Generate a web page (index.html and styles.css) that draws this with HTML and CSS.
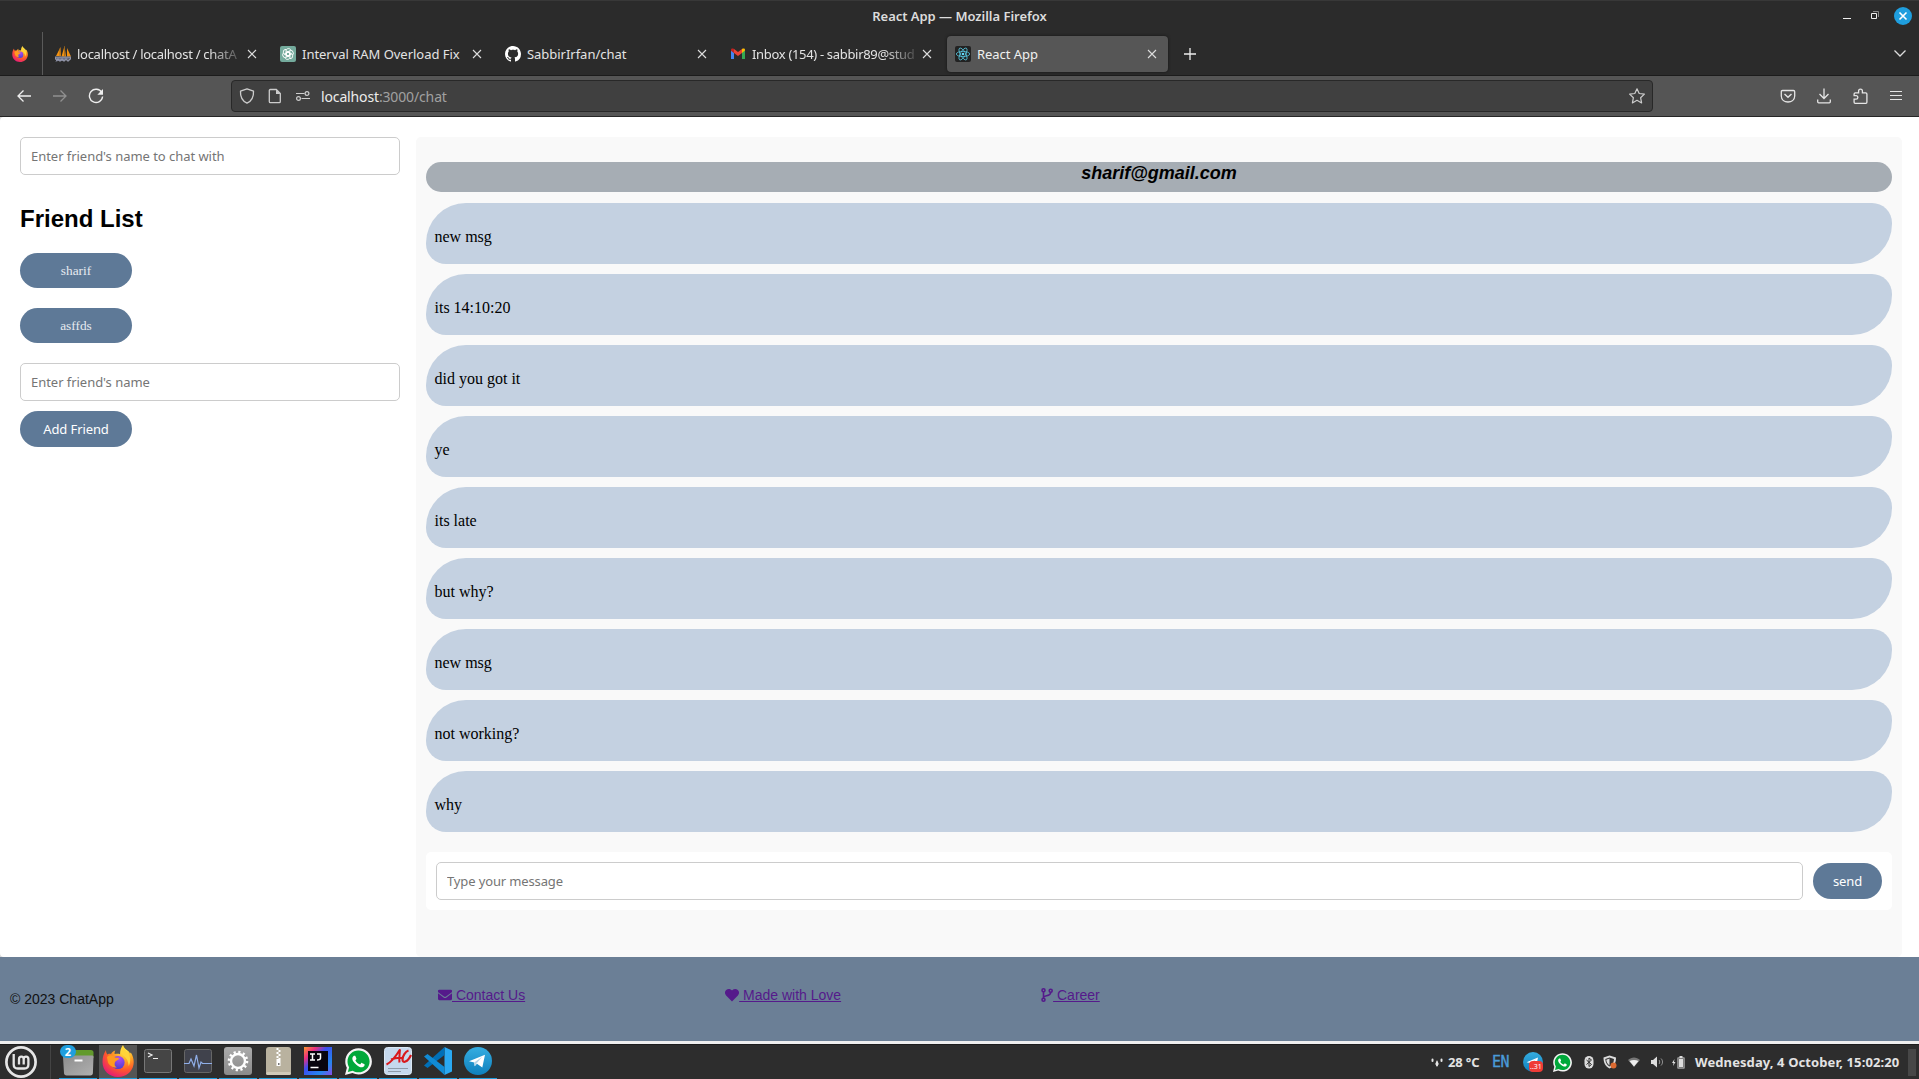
FILE: index.html
```html
<!DOCTYPE html>
<html lang="en">
<head>
<meta charset="utf-8">
<title>React App</title>
<link rel="stylesheet" href="styles.css">
</head>
<body>
<svg class="defs" width="0" height="0" aria-hidden="true">
  <defs>
    <radialGradient id="ffBody" cx=".72" cy=".15" r=".95"><stop offset="0" stop-color="#fff44f"/><stop offset=".35" stop-color="#ffa724"/><stop offset=".65" stop-color="#ff5a2a"/><stop offset="1" stop-color="#e3147e"/></radialGradient>
    <radialGradient id="ffCore" cx=".6" cy=".2" r=".8"><stop offset="0" stop-color="#b04cf0"/><stop offset="1" stop-color="#4a3fd0"/></radialGradient>
    <linearGradient id="tgBlue" x1="0" y1="0" x2="0" y2="1"><stop offset="0" stop-color="#35ade1"/><stop offset="1" stop-color="#0f80bd"/></linearGradient>
    <linearGradient id="grey" x1="0" y1="0" x2="0" y2="1"><stop offset="0" stop-color="#ababab"/><stop offset="1" stop-color="#8a8a8a"/></linearGradient>
    <linearGradient id="folder" x1="0" y1="0" x2="1" y2="1"><stop offset="0" stop-color="#8d8d8d"/><stop offset="1" stop-color="#b0b0b0"/></linearGradient>
    <linearGradient id="ij" x1="0" y1="0" x2="1" y2="1"><stop offset="0" stop-color="#fc9a2c"/><stop offset=".22" stop-color="#f0307c"/><stop offset=".42" stop-color="#3b4ff0"/><stop offset=".75" stop-color="#2486ee"/><stop offset="1" stop-color="#8a4be8"/></linearGradient>
    <symbol id="firefox" viewBox="0 0 32 32">
      <path fill="url(#ffBody)" d="M4 5c0 2 .6 3.6 1.5 4.4C7 8.700 8 8.800 9 9c1-1.700 2.500-3 4.300-3.500-.8 1.300-.9 2.500-.6 3.500 2-.4 3.900-.6 5.300.2.100-3.700 1-6.700 3-9.200.8 3 3.200 4.700 5.500 6.300.6.700 1.200 1.500 1.500 2.300l.8-1.100c2.600 4 3.300 8 2.700 12C30.300 27 24 32 16 32 7.200 32 .5 25.500.5 17 .5 12.300 1.700 8.400 4 5z"/>
      <circle cx="16" cy="17.500" r="6.600" fill="url(#ffCore)"/>
      <path fill="#ff9a1f" d="M5 12c3-3 6-2 8 .5 2 .3 3.800.3 4 .8.200 1.500-2.700 2.200-4 3.700-.5 2-.8 4 2 5.500-5 .5-9-3-9.300-6.500z"/>
      <path fill="#ffd43a" d="M21 1c.8 3 3.200 4.700 5 7 2.500 3.500 3 9 .7 13C26.500 16 24 12 20 9.500c-.6-3.500 0-6 1-8.500z"/>
    </symbol>
    <symbol id="whatsapp" viewBox="-24 8 496 496">
      <path fill="#f4f4f4" d="M224 12C90 12-19 120-19 254c0 41 10 80 29 115L-24 504l137-36c35 17 72 26 111 26 134 0 246-106 246-240S358 12 224 12z"/>
      <path fill="#00a83a" d="M224 52C112 52 22 142 22 254c0 39 11 75 30 106L28 450l92-24c31 18 66 29 104 29 112 0 204-89 204-201S336 52 224 52z"/>
      <path fill="#fff" d="M325.100 300.500c-5.500-2.800-32.800-16.200-37.900-18-5.100-1.900-8.800-2.800-12.500 2.800-3.700 5.600-14.300 18-17.600 21.800-3.200 3.700-6.500 4.200-12 1.400-32.600-16.300-54-29.100-75.500-66-5.700-9.800 5.700-9.100 16.300-30.300 1.800-3.700.9-6.900-.5-9.700-1.400-2.800-12.500-30.100-17.100-41.200-4.500-10.800-9.100-9.300-12.500-9.500-3.200-.2-6.900-.2-10.600-.2-3.700 0-9.700 1.400-14.800 6.900-5.100 5.600-19.400 19-19.400 46.300 0 27.300 19.900 53.700 22.600 57.400 2.800 3.700 39.100 59.700 94.800 83.800 35.200 15.200 49 16.500 66.600 13.900 10.700-1.600 32.800-13.400 37.400-26.400 4.600-13 4.600-24.100 3.200-26.400-1.300-2.500-5-3.900-10.500-6.600z"/>
    </symbol>
    <symbol id="telegram" viewBox="0 0 28 28">
      <circle cx="14" cy="14" r="14" fill="url(#tgBlue)"/>
      <path fill="#fff" d="M5 14.200 21 7.800 18.300 20.500 13 16.800 10.700 19.300 10.200 15.500z"/><path fill="#b7d4e6" d="m10.200 15.500 8-5.700-5.700 6.700-1.800 2.800z"/>
    </symbol>
    <symbol id="close" viewBox="0 0 10 10"><path d="m1 1 8 8M9 1 1 9" fill="none" stroke="currentColor" stroke-width="1.100"/></symbol>
  </defs>
</svg>

<header class="titlebar">
  <span class="window-title">React App — Mozilla Firefox</span>
  <div class="window-buttons">
    <svg width="10" height="10"><path d="M1 7.500h8" stroke="#eee"/></svg>
    <svg width="10" height="10"><path d="M1.500 2.500h5v5h-5z" fill="none" stroke="#eee"/><path d="M3 .5h5.500V6" fill="none" stroke="#888"/></svg>
    <svg width="18" height="18"><circle cx="9" cy="9" r="9" fill="#1f9ede"/><path d="m5.500 5.500 7 7m0-7-7 7" stroke="#fff" stroke-width="1.600"/></svg>
  </div>
</header>

<nav class="tabs">
  <div class="pinned"><svg width="16" height="16"><use href="#firefox"/></svg></div>
  <div class="tab">
    <svg class="favicon" width="16" height="16"><path d="M5.500 1 1 10h5zM9.500 0 6.500 10.500h4.500zM12 2l4 8.500h-4z" fill="#f29111"/><path d="M9.500 0v10.500M5 2v9" stroke="#8a5d20" stroke-width=".7"/><path d="M0 11h16l-1 3H1zM1 15.500l2-3 2 3 2-3 2 3 2-3 2 3 2-3" fill="#6b7088" stroke="#9a9db0" stroke-width=".9"/></svg>
    <span class="tab-name clipped t-local">localhost / localhost / chatA</span><svg class="x" width="10" height="10"><use href="#close"/></svg>
  </div>
  <div class="tab">
    <svg class="favicon" width="16" height="16"><rect width="16" height="16" rx="2" fill="#74aa9c"/><g fill="none" stroke="#fff" stroke-width=".9"><path id="petal" d="M6 8.900V5c0-2.800 4-3.300 5-.8M5.900 8.800 8 10l3.600-2"/><use href="#petal" transform="rotate(60 8 8)"/><use href="#petal" transform="rotate(120 8 8)"/><use href="#petal" transform="rotate(180 8 8)"/><use href="#petal" transform="rotate(240 8 8)"/><use href="#petal" transform="rotate(300 8 8)"/></g></svg>
    <span class="tab-name">Interval RAM Overload Fix</span><svg class="x" width="10" height="10"><use href="#close"/></svg>
  </div>
  <div class="tab">
    <svg class="favicon" width="16" height="16"><path fill="#fff" d="M8 0C3.580 0 0 3.580 0 8c0 3.540 2.290 6.530 5.470 7.590.4.070.55-.17.55-.38 0-.19-.01-.82-.01-1.490-2.010.37-2.530-.49-2.690-.94-.09-.23-.48-.94-.82-1.130-.28-.15-.68-.52-.01-.53.63-.01 1.080.58 1.230.82.72 1.210 1.870.87 2.330.66.070-.52.28-.87.51-1.070-1.780-.2-3.640-.89-3.640-3.950 0-.87.31-1.590.82-2.150-.08-.2-.36-1.020.08-2.120 0 0 .67-.21 2.200.82.64-.18 1.320-.27 2-.27s1.360.09 2 .27c1.530-1.040 2.200-.82 2.200-.82.44 1.100.16 1.920.08 2.120.51.56.82 1.270.82 2.150 0 3.070-1.870 3.750-3.650 3.950.29.25.54.73.54 1.480 0 1.070-.01 1.930-.01 2.200 0 .21.15.46.55.38A8.010 8.010 0 0 0 16 8c0-4.420-3.580-8-8-8z"/></svg>
    <span class="tab-name">SabbirIrfan/chat</span><svg class="x" width="10" height="10"><use href="#close"/></svg>
  </div>
  <div class="tab">
    <svg class="favicon" width="16" height="16"><path d="M1 4v9h3V6.500z" fill="#4285f4"/><path d="M12 6.500V13h3V4z" fill="#34a853"/><path d="M12 3v4l3-2.500V4c0-1.500-1.500-1.700-3-1z" fill="#fbbc04"/><path d="M4 3 8 6l4-3v4l-4 3-4-3z" fill="#ea4335"/><path d="M1 4v.7L4 7V3C2.500 2.300 1 2.500 1 4z" fill="#c5221f"/></svg>
    <span class="tab-name clipped t-inbox">Inbox (154) - sabbir89@stud</span><svg class="x" width="10" height="10"><use href="#close"/></svg>
  </div>
  <div class="tab active">
    <svg class="favicon" width="16" height="16"><rect width="16" height="16" rx="2" fill="#222"/><g fill="none" stroke="#58c4dc" stroke-width=".8"><ellipse cx="8" cy="8" rx="6.700" ry="2.600"/><ellipse cx="8" cy="8" rx="6.700" ry="2.600" transform="rotate(60 8 8)"/><ellipse cx="8" cy="8" rx="6.700" ry="2.600" transform="rotate(120 8 8)"/></g><circle cx="8" cy="8" r="1.300" fill="#61dafb"/></svg>
    <span class="tab-name">React App</span><svg class="x" width="10" height="10"><use href="#close"/></svg>
  </div>
  <svg class="new-tab" width="12" height="12"><path d="M6 0v12M0 6h12" stroke="#eee" stroke-width="1.300"/></svg>
  <svg class="all-tabs" width="14" height="9"><path d="m1.500 1.500 5.500 5.500 5.500-5.500" fill="none" stroke="#ddd" stroke-width="1.300"/></svg>
</nav>

<div class="toolbar">
  <div class="nav-buttons">
    <svg width="16" height="16"><path d="M15 8H2M7.500 2.500 2 8l5.500 5.500" fill="none" stroke="#eee" stroke-width="1.300"/></svg>
    <svg width="16" height="16"><path d="M1 8h13M8.500 2.500 14 8l-5.500 5.500" fill="none" stroke="#909090" stroke-width="1.300"/></svg>
    <svg width="16" height="16"><path d="M13.700 4.500A6.600 6.600 0 1 0 14.600 8.500" fill="none" stroke="#eee" stroke-width="1.400"/><path d="M15 1v5.800H9.300z" fill="#eee"/></svg>
  </div>
  <div class="urlbar">
    <svg width="16" height="16"><path d="M8 .8 14.500 3.200c.3 5-1 9.300-6.500 12C2.500 12.500 1.200 8.200 1.500 3.200z" fill="none" stroke="#ccc" stroke-width="1.300" stroke-linejoin="round"/></svg>
    <svg width="16" height="16"><path d="M3.300 1.500h6l4 4v8c0 .8-.3 1.200-1 1.200h-9c-.7 0-1-.4-1-1.200V2.700c0-.8.3-1.200 1-1.200z" fill="none" stroke="#ccc" stroke-width="1.300"/><path d="M9 1.500V6h4.500z" fill="#ccc"/></svg>
    <svg width="16" height="16"><g fill="none" stroke="#ccc" stroke-width="1.200"><path d="M1 5.500h8.500M6.500 10.500H15"/><circle cx="12" cy="5.500" r="1.900"/><circle cx="3.500" cy="10.500" r="1.900"/></g></svg>
    <span class="url"><b>localhost</b>:3000/chat</span>
    <svg class="star" width="18" height="18"><path d="m9 1.800 2.200 4.700 5.200.6-3.800 3.600 1 5.200L9 13.300l-4.600 2.600 1-5.200L1.600 7.100l5.200-.6z" fill="none" stroke="#ccc" stroke-width="1.200" stroke-linejoin="round"/></svg>
  </div>
  <div class="tools">
    <svg width="16" height="16"><path d="M2.500 2.500h11c.8 0 1.200.4 1.200 1.200V8c0 8-13.400 8-13.400 0V3.700c0-.8.4-1.200 1.200-1.200z" fill="none" stroke="#e5e5e5" stroke-width="1.300"/><path d="m4.500 6 3.500 3.300L11.500 6" fill="none" stroke="#e5e5e5" stroke-width="1.400"/></svg>
    <svg width="16" height="16"><path d="M8 .5v10M3.500 6 8 10.500 12.500 6M1.700 11.500v2.300c0 .6.400 1 1 1h10.600c.6 0 1-.4 1-1v-2.300" fill="none" stroke="#e5e5e5" stroke-width="1.300"/></svg>
    <svg width="16" height="16"><path d="M3.100 15.300c-.6 0-1-.3-1-1v-3.100h2a1.700 1.700 0 0 0 0-3.500h-2V6c0-.9.400-1.200 1.200-1.200h3.300V3a1.900 1.900 0 0 1 3.800 0v1.800h3.300c.8 0 1.200.3 1.200 1.200v8.300c0 .7-.4 1-1 1z" fill="none" stroke="#e5e5e5" stroke-width="1.300"/></svg>
    <svg width="16" height="16"><path d="M2 3.500h12M2 7.500h12M2 11.500h12" stroke="#e5e5e5" stroke-width="1.200"/></svg>
  </div>
</div>

<main class="viewport">
  <div class="app">
    <aside class="friends">
      <input class="field" type="text" placeholder="Enter friend's name to chat with">
      <h2>Friend List</h2>
      <button class="pill friend">sharif</button>
      <button class="pill friend">asffds</button>
      <input class="field" type="text" placeholder="Enter friend's name">
      <button class="pill add">Add Friend</button>
    </aside>
    <section class="chat">
      <h3>sharif@gmail.com</h3>
      <p class="message">new msg</p>
      <p class="message">its 14:10:20</p>
      <p class="message">did you got it</p>
      <p class="message">ye</p>
      <p class="message">its late</p>
      <p class="message">but why?</p>
      <p class="message">new msg</p>
      <p class="message">not working?</p>
      <p class="message">why</p>
      <div class="composer">
        <input class="field" type="text" placeholder="Type your message">
        <button class="pill send">send</button>
      </div>
    </section>
  </div>
  <footer class="site-footer">
    <span class="copyright">© 2023 ChatApp</span>
    <a><svg width="14" height="14"><path d="M1.300 1.800h11.400c1.700 0 1.700 2 .8 2.700L8 8.600c-.7.500-1.300.5-2 0L.5 4.500c-.9-.7-.9-2.700.8-2.700z"/><path d="M0 5.300 5.500 9.400c.9.700 2.100.7 3 0L14 5.300v5.500c0 .9-.5 1.400-1.400 1.400H1.400C.5 12.200 0 11.700 0 10.800z"/></svg><span>&nbsp;Contact Us</span></a>
    <a><svg width="14" height="14"><path d="M7 13.500 1.100 7.500C-.6 5.600-.3 3.200 1.200 1.900 2.900.5 5.300.8 6.500 2.100l.5.500.5-.5C8.700.8 11.100.5 12.800 1.900c1.500 1.300 1.800 3.700.1 5.600z"/></svg><span>&nbsp;Made with Love</span></a>
    <a><svg width="12" height="14"><g fill="none" stroke="#551a8b" stroke-width="1.600"><circle cx="2.500" cy="2.300" r="1.500"/><circle cx="9.700" cy="2.800" r="1.500"/><circle cx="2.500" cy="11.700" r="1.500"/><path d="M2.500 3.800v6.400M9.700 4.300c0 5-7.200 2.200-7.200 5.500"/></g></svg><span>&nbsp;Career</span></a>
  </footer>
</main>

<div class="taskbar">
  <div class="start"><svg width="32" height="32"><circle cx="16" cy="16" r="14.600" fill="none" stroke="#e6e6e6" stroke-width="2.700"/><path d="M8.700 8v10.500c0 2.500 1.500 4 4 4h6.700c2.500 0 4-1.500 4-4v-5.300c0-3.500-4.700-3.500-4.700 0V18.500m0-5.300c0-3.500-4.700-3.500-4.700 0V18.500" fill="none" stroke="#e6e6e6" stroke-width="2.300"/></svg></div>
  <div class="launchers">
    <div class="app-icon"><svg width="32" height="30"><path d="M2 7c0-2 1-3 3-3h24c1.500 0 2.500 1 2.500 2.500V12H2z" fill="#629a2c"/><path d="M1 11c0-1 .5-1.500 1.500-1.500h27.500c1 0 1.500.5 1.500 1.500l-.6 16c0 1.500-1 2.500-2.500 2.500H4.600C3 29.500 2 28.500 2 27z" fill="url(#folder)"/><path d="M12.500 14.500h8" stroke="#fff" stroke-width="2"/></svg><span class="count">2</span></div>
    <div class="app-icon focused"><svg width="32" height="32"><use href="#firefox"/></svg></div>
    <div class="app-icon"><svg width="28" height="26"><rect x=".5" y="1.500" width="27" height="23" rx="2" fill="#454545" stroke="#777"/><path d="m4 5 4 2-4 2M9 10.500h5" fill="none" stroke="#eee" stroke-width="1.200"/></svg></div>
    <div class="app-icon"><svg width="28" height="26"><rect x=".5" y="1.500" width="27" height="23" rx="2" fill="#40424c" stroke="#666"/><path d="M0 15.500h5l2-4.500 3 7 2.500-11L15 20l2-6 1.500 1.500H28" fill="none" stroke="#8faee8" stroke-width="1.200"/></svg></div>
    <div class="app-icon"><svg width="28" height="28"><rect width="28" height="28" rx="3" fill="url(#grey)"/><circle cx="14" cy="14" r="9" fill="none" stroke="#fff" stroke-width="2.600" stroke-dasharray="2.200 2.510"/><circle cx="14" cy="14" r="7" fill="none" stroke="#fff" stroke-width="2.400"/></svg></div>
    <div class="app-icon"><svg width="25" height="28"><rect width="25" height="28" rx="3" fill="#b9b29f"/><rect y="25" width="25" height="3" rx="1.500" fill="#d0cab9"/><path d="M11.500 1v11M13.500 3v9" stroke="#fff" stroke-width="2" stroke-dasharray="2 2"/><rect x="10.500" y="12" width="4" height="7" fill="#fff"/><rect x="12" y="16" width="1.500" height="2" fill="#777"/></svg></div>
    <div class="app-icon"><svg width="28" height="28"><rect width="28" height="28" fill="url(#ij)"/><rect x="4" y="4" width="20" height="20" fill="#08050e"/><path d="M6.500 20.500h8M6 7h5M6 13h5M8.500 7v6M13 7h3.500v4c0 2-1.500 2-3.500 2" fill="none" stroke="#fff" stroke-width="1.500"/></svg></div>
    <div class="app-icon"><svg width="27" height="27"><use href="#whatsapp"/></svg></div>
    <div class="app-icon"><svg width="28" height="28"><rect x=".5" y=".5" width="27" height="27" rx="3" fill="#c5d8ed" stroke="#dce8f4"/><path d="M4 21.500h20M4 24.500h13" stroke="#8d9baa"/><path d="M2.500 17.500C7 15.500 12 9 16 2.500c-.5 5-1 10-.5 13M7 12.500c4-1.500 7-2 11-1.500" fill="none" stroke="#d9191c" stroke-width="2"/><path d="M24.500 3.500c-3 1-6 5.500-6 9 0 4 5 3 8.500-4.500" fill="none" stroke="#d9191c" stroke-width="2.200"/></svg></div>
    <div class="app-icon"><svg width="28" height="28"><path d="M20.500 0 28 3.500v21L20.500 28z" fill="#2aa9f2"/><path d="M20.500 0v8L3.500 21 0 18.500z" fill="#0070b8"/><path d="M20.500 28v-8L3.500 7 0 9.500z" fill="#118bd5"/></svg></div>
    <div class="app-icon"><svg width="28" height="28"><use href="#telegram"/></svg></div>
  </div>
  <div class="tray">
    <svg class="weather" width="12" height="12"><path d="M1.500 3.500v1.500M6 6.500v3M10.500 3.500v1.500" stroke="#e5e5e5" stroke-width="2" stroke-linecap="round"/><path d="M6 4 4 8.500h4z" fill="#e5e5e5"/></svg>
    <span class="temp">28 °C</span>
    <span class="lang">EN</span>
    <div class="tg-tray"><svg width="20" height="20"><use href="#telegram"/></svg><span class="unread">..31</span></div>
    <svg class="wa-tray" width="19" height="19"><use href="#whatsapp"/></svg>
    <svg class="bt" width="10" height="14"><rect x=".5" y="1" width="9" height="12.500" rx="4.500" fill="#ddd"/><path d="m2.500 5 5 4.500L5 11.500V3l2.500 2-5 4.500" fill="none" stroke="#333"/></svg>
    <svg class="guard" width="14" height="14"><path d="M6.500.5 13 2.500c0 5-1.500 8.500-6.500 11C2 11 .5 7.500.5 2.500z" fill="#ddd"/><path d="M6.500 2.500 11 4c-.2 3.500-1.500 6-4.500 7.500C4 10 2.500 7.500 2.300 4z" fill="#333"/><path d="M6.500 3.500v7C4.500 9 3.500 7 3.300 4.700z" fill="#ddd"/><circle cx="10.500" cy="10.500" r="3" fill="#dc6a31"/></svg>
    <svg class="wifi" width="14" height="12"><path d="M1 4c3.500-3.500 8.500-3.500 12 0L7 11z" fill="#777"/><path d="M2.500 5c3-1.500 6-1.500 9 0L7 10.500z" fill="#eee"/></svg>
    <svg class="volume" width="14" height="12"><path d="M1 4h2l4-3.500v11L3 8H1z" fill="#ddd"/><path d="M9 4c1 1 1 3 0 4M11 2.500c2 2 2 5 0 7" fill="none" stroke="#999"/></svg>
    <svg class="battery" width="14" height="14"><path d="M2.500 4 0 8h1.500L1 11l2.500-4H2z" fill="#ddd"/><path d="M5.500 2.500h7v11h-7zM7.500 1h3v1.500h-3z" fill="#ddd"/><path d="M6.500 3.500h5v9h-5z" fill="none" stroke="#555" stroke-width=".7"/></svg>
    <span class="clock">Wednesday, 4 October, 15:02:20</span>
    <i class="show-desktop"></i>
  </div>
</div>
</body>
</html>
```
FILE: styles.css
```css
* { box-sizing: border-box; }
html, body { margin: 0; height: 100%; }
body { display: flex; flex-direction: column; width: 1919px; height: 1079px; overflow: hidden; background: #2b2b2b; font-family: "Noto Sans", "Open Sans", sans-serif; font-size: 13px; }
svg { display: block; flex: none; }
.defs { position: absolute; }
span { white-space: nowrap; }

/* Window frame */
.titlebar { display: grid; grid-template-columns: 1fr auto 1fr; align-items: center; height: 32px; flex: none; border-top: 1px solid #383838; padding: 0 7px 2px 0; }
.window-title { grid-column: 2; color: #dcdcdc; font-weight: 600; font-size: 13px; margin-left: 7px; letter-spacing: -.03px; }
.window-buttons { display: flex; justify-content: flex-end; align-items: center; gap: 18px; }
.window-buttons svg:last-child { margin-left: -4px; }
.tabs { display: flex; align-items: center; height: 44px; flex: none; border-bottom: 1px solid #1c1c1c; padding-right: 12px; }
.pinned { width: 43px; height: 43px; padding: 14px 0 0 12px; border-right: 1px solid #5a5a5a; margin-right: 4px; }
.tab { display: flex; align-items: center; width: 221px; height: 36px; margin-right: 4px; padding: 0 11px 0 8px; border-radius: 4px; color: #e3e3e3; }
.tab.active { background: #565656; box-shadow: 0 0 3px #151515; color: #f0f0f0; }
.tab-name { flex: 1; margin-left: 6px; overflow: hidden; font-size: 13px; letter-spacing: -.03px; }
.clipped { -webkit-mask-image: linear-gradient(90deg, #000 calc(100% - 34px), rgba(0, 0, 0, .1)); mask-image: linear-gradient(90deg, #000 calc(100% - 34px), rgba(0, 0, 0, .1)); }
.t-local { letter-spacing: -.28px; }
.t-inbox { letter-spacing: -.32px; }
.tab .x { margin-left: 4px; color: #ddd; }
.new-tab { margin-left: 12px; }
.all-tabs { margin-left: auto; }
.toolbar { display: flex; align-items: center; height: 41px; flex: none; background: #555; border-bottom: 1px solid #262626; padding: 0 15px 0 16px; }
.nav-buttons { display: flex; gap: 20px; width: 215px; }
.urlbar { display: flex; align-items: center; gap: 12px; width: 1422px; height: 32px; padding: 0 6px 0 7px; background: #404040; border: 1px solid #282828; border-radius: 4px; }
.url { margin-left: -2px; color: #a0a0a0; font-size: 14px; letter-spacing: -.14px; }
.url b { color: #ececec; font-weight: 400; }
.star { margin-left: auto; }
.tools { display: flex; gap: 20px; margin-left: auto; }

/* Chat page */
.viewport { display: flex; flex-direction: column; height: 927px; flex: none; background: #d8d8d8; border-bottom: 3px solid #efefef; }
.app { display: flex; height: 840px; flex: none; gap: 16px; padding: 20px 17px 0 20px; background: #fff; border-radius: 4px 0 0 4px; }
.friends { display: flex; flex-direction: column; align-items: flex-start; width: 380px; flex: none; }
.field { width: 100%; height: 38px; padding: 0 10px; border: 1px solid #ccc; border-radius: 5px; background: #fff; font: 13px "Noto Sans", "Open Sans", sans-serif; letter-spacing: -.04px; }
.field::placeholder { color: #757575; }
h2 { margin: 30px 0 20px; height: 28px; font: bold 24px/28px "Liberation Sans", Arial, sans-serif; }
.pill { border: 0; border-radius: 20px; background: #5e7997; color: #fff; padding: 0; width: 112px; height: 36px; font: 13px "Noto Sans", "Open Sans", sans-serif; letter-spacing: -.1px; }
.pill.friend { height: 35px; margin-bottom: 20px; color: #e6eaf0; font: 13.333px "Liberation Serif", "Times New Roman", serif; letter-spacing: 0; }
.pill.add { margin-top: 10px; }
.chat { flex: 1; padding: 25px 10px 0; background: #f9f9f9; border-radius: 5px; }
h3 { margin: 0 0 11px; height: 30px; border-radius: 15px; background: #a6adb4; text-align: center; font: italic bold 18px/23px "Liberation Sans", Arial, sans-serif; }
.message { height: 61px; margin: 0 0 10px; padding: 24px 8.5px 0; border-radius: 40px 20px; background: #c4d1e1; color: #000; font: 16px/20px "Liberation Serif", "Times New Roman", serif; }
.composer { display: flex; align-items: center; gap: 10px; height: 58px; margin-top: 20px; padding: 0 10px; border-radius: 5px; background: #fff; }
.composer .field { letter-spacing: -.13px; }
.composer .pill { width: 69px; flex: none; }
.site-footer { display: flex; height: 84px; padding: 0 10px; gap: 200px; background: #6b7f96; font: 14px/16px "Liberation Sans", Arial, sans-serif; }
.copyright { width: 228px; padding-top: 34px; color: #111; }
.site-footer a { display: flex; height: 16px; margin-top: 30px; color: #551a8b; fill: #551a8b; }
.site-footer a svg { margin-top: 1px; }
.site-footer a span { text-decoration: underline; }

/* Desktop panel */
.taskbar { display: flex; height: 35px; flex: none; background: #2d2d2d; border-top: 1px solid #1d1d1d; }
.start { width: 51px; padding: 1px 0 0 5px; border-right: 1px solid #444; margin-right: 8px; }
.launchers { display: flex; gap: 2px; }
.app-icon { position: relative; display: flex; align-items: center; justify-content: center; width: 38px; height: 34px; padding-bottom: 1px; border-bottom: 1px solid #1f9ede; }
.focused { background: #555; }
.count { position: absolute; left: 1px; top: 0; width: 16px; height: 13px; border-radius: 7px; background: #1f9ede; color: #fff; font-size: 11px; font-weight: 700; line-height: 13px; text-align: center; }
.tray { display: flex; align-items: center; margin-left: auto; padding-right: 3px; color: #e3e3e3; }
.temp { width: 33px; margin-left: 5px; font-weight: 700; font-size: 13px; letter-spacing: -.15px; }
.lang { width: 17px; margin-left: 11px; color: #4a9bd9; font: 15px "DejaVu Sans Mono", monospace; letter-spacing: -.5px; -webkit-text-stroke: .3px #4a9bd9; }
.tg-tray { position: relative; margin-left: 14px; }
.unread { position: absolute; left: 6px; top: 9px; width: 14px; height: 11px; border-radius: 4px; background: #ef3b36; color: #fff; font-size: 7px; line-height: 11px; text-align: center; }
.wa-tray { margin-left: 10px; }
.bt { margin-left: 12px; }
.guard { margin-left: 9px; }
.wifi { margin-left: 10px; }
.volume { margin-left: 9px; }
.battery { margin-left: 8px; }
.clock { width: 205px; margin-left: 9px; font-weight: 700; font-size: 13px; letter-spacing: .1px; }
.show-desktop { width: 8px; height: 27px; margin-left: 8px; background: #474747; }
```
